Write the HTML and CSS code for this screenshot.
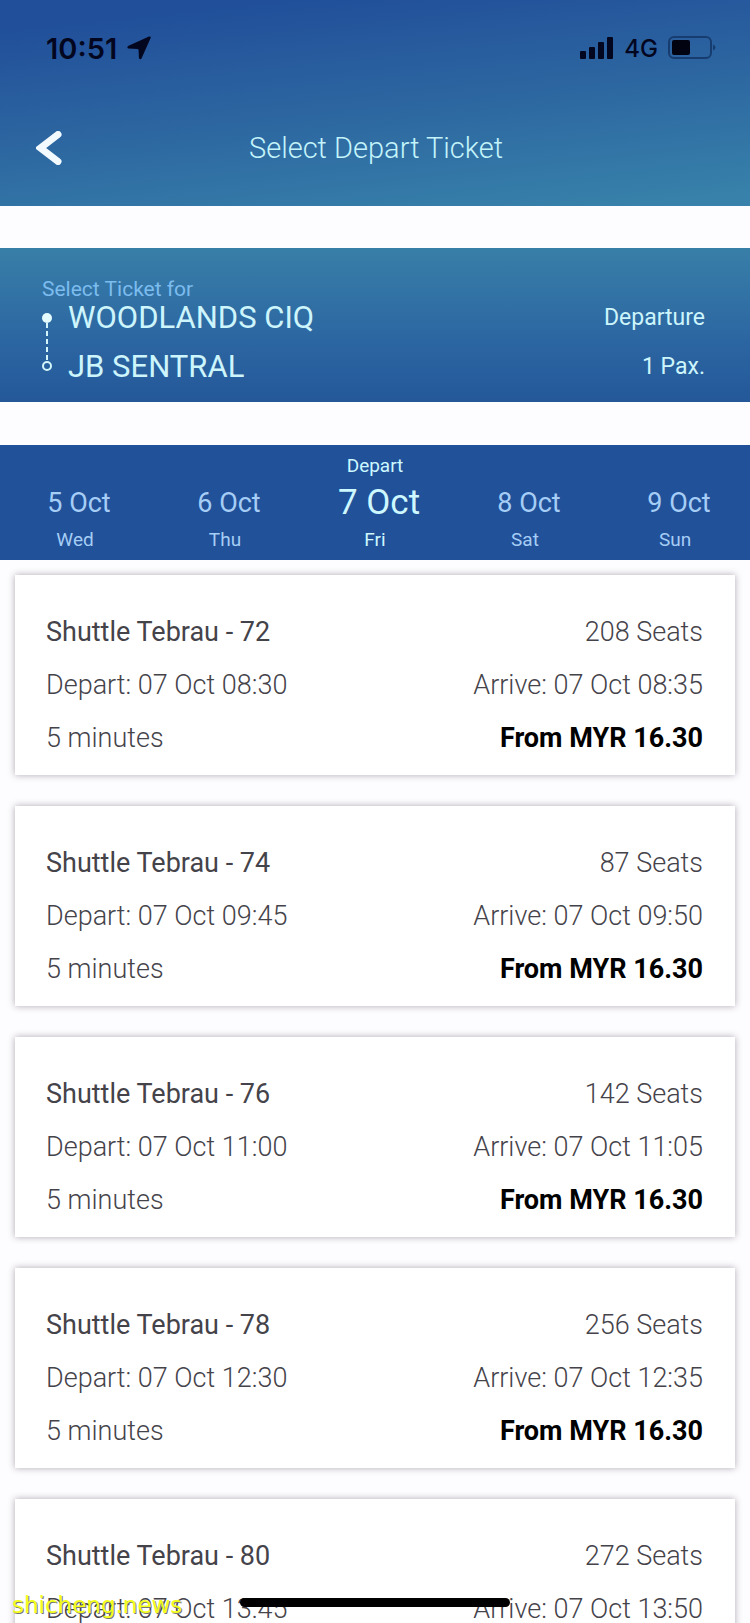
FILE: index.html
```html
<!DOCTYPE html>
<html lang="en">
<head>
  <meta charset="UTF-8"/>
  <meta name="viewport" content="width=device-width, initial-scale=1.0"/>
  <title>Select Depart Ticket</title>
  <link rel="stylesheet" href="styles.css">
</head>
<body>
  <div class="screen">
    <header class="top">
      <div class="status">
        <div class="status-left">
          <span class="time">10:51</span>
          <svg width="24" height="24" viewBox="0 0 24 24"><path d="M22 .6C23.500 0 24.200 .8 23.500 2.200L14.600 22.200C14 23.700 12 23.500 11.900 21.800L11.600 14Q11.500 13 10.500 12.900L2 12.600C0 12.500 -.2 10.500 1.600 9.700Z" fill="#03061f"/></svg>
        </div>
        <div class="status-right">
          <svg width="34" height="22" viewBox="0 0 34 22" fill="#03061f"><rect x="0" y="14" width="6" height="8" rx="1"/><rect x="9" y="10" width="6" height="12" rx="1"/><rect x="18" y="5" width="6" height="17" rx="1"/><rect x="27" y="0" width="6" height="22" rx="1"/></svg>
          <span class="network">4G</span>
          <svg width="48" height="24" viewBox="0 0 48 24"><rect x="1" y="1" width="42" height="21" rx="5" fill="none" stroke="#173d70" stroke-width="2"/><rect x="4" y="4" width="18" height="15" rx="2" fill="#010310"/><path d="M45 8.500Q47.500 9.500 47.500 11.500T45 14.500Z" fill="#173d70"/></svg>
        </div>
      </div>
      <div class="nav">
        <button class="back" aria-label="Back">
          <svg width="26" height="34" viewBox="0 0 26 34"><path d="M22 3.500L4.500 17L22 30.500" fill="none" stroke="#f2faff" stroke-width="7" stroke-linecap="round" stroke-linejoin="miter"/></svg>
        </button>
        <h1>Select Depart Ticket</h1>
      </div>
    </header>

    <section class="route">
      <div class="route-label">Select Ticket for</div>
      <div class="route-body">
        <svg width="10" height="60" viewBox="0 0 10 60"><circle cx="5" cy="6" r="5" fill="#e4fbff"/><path d="M5 11V48" stroke="#d4f5fb" stroke-width="2" stroke-dasharray="5 3"/><circle cx="5" cy="54" r="4" fill="none" stroke="#d4f5fb" stroke-width="2"/></svg>
        <div class="stations">
          <div>WOODLANDS CIQ</div>
          <div>JB SENTRAL</div>
        </div>
        <div class="trip">
          <div>Departure</div>
          <div>1 Pax.</div>
        </div>
      </div>
    </section>

    <nav class="dates">
      <button class="date"><span class="day">5 Oct</span><span>Wed</span></button>
      <button class="date"><span class="day">6 Oct</span><span>Thu</span></button>
      <button class="date active"><span>Depart</span><span class="day">7 Oct</span><span>Fri</span></button>
      <button class="date"><span class="day">8 Oct</span><span>Sat</span></button>
      <button class="date"><span class="day">9 Oct</span><span>Sun</span></button>
    </nav>

    <main class="tickets">
      <article class="ticket">
        <div class="row"><h2>Shuttle Tebrau - 72</h2><span>208 Seats</span></div>
        <div class="row"><span>Depart: 07 Oct 08:30</span><span>Arrive: 07 Oct 08:35</span></div>
        <div class="row"><span>5 minutes</span><strong>From MYR 16.30</strong></div>
      </article>
      <article class="ticket">
        <div class="row"><h2>Shuttle Tebrau - 74</h2><span>87 Seats</span></div>
        <div class="row"><span>Depart: 07 Oct 09:45</span><span>Arrive: 07 Oct 09:50</span></div>
        <div class="row"><span>5 minutes</span><strong>From MYR 16.30</strong></div>
      </article>
      <article class="ticket">
        <div class="row"><h2>Shuttle Tebrau - 76</h2><span>142 Seats</span></div>
        <div class="row"><span>Depart: 07 Oct 11:00</span><span>Arrive: 07 Oct 11:05</span></div>
        <div class="row"><span>5 minutes</span><strong>From MYR 16.30</strong></div>
      </article>
      <article class="ticket">
        <div class="row"><h2>Shuttle Tebrau - 78</h2><span>256 Seats</span></div>
        <div class="row"><span>Depart: 07 Oct 12:30</span><span>Arrive: 07 Oct 12:35</span></div>
        <div class="row"><span>5 minutes</span><strong>From MYR 16.30</strong></div>
      </article>
      <article class="ticket">
        <div class="row"><h2>Shuttle Tebrau - 80</h2><span>272 Seats</span></div>
        <div class="row"><span>Depart: 07 Oct 13:45</span><span>Arrive: 07 Oct 13:50</span></div>
        <div class="row"><span>5 minutes</span><strong>From MYR 16.30</strong></div>
      </article>
    </main>

    <div class="home-bar"></div>
    <div class="watermark">shicheng.news</div>
  </div>
</body>
</html>
```
FILE: styles.css
```css
* { box-sizing:border-box; }
body { margin:0; background:#fdfcfe; color:#45434a; font-family:Roboto, sans-serif; }
h1, h2 { margin:0; }
button { border:0; padding:0; background:none; color:inherit; font:inherit; cursor:pointer; }
svg { display:block; flex-shrink:0; }
.screen { position:relative; height:100vh; overflow:hidden; }

/* header */
.top { padding:28px 34px 24px 36px; background:linear-gradient(174deg, #214f9a 10%, #2c65a0 50%, #3781aa 95%); }
.status { display:flex; justify-content:space-between; align-items:center; height:40px; color:#03061f; font-family:Inter, sans-serif; }
.status-left, .status-right { display:flex; align-items:center; gap:10px; }
.status-left { padding-left:10px; }
.time { font-size:29px; font-weight:600; }
.network { font-size:24px; font-weight:500; }
.nav { display:grid; grid-template-columns:26px 1fr 26px; align-items:center; height:114px; padding-top:46px; }
.nav h1 { color:#c4f4fb; font-size:29px; font-weight:300; text-align:center; }

/* route */
.route { margin-top:42px; padding:29px 45px 11px 42px; background:linear-gradient(#387fa8, #2c66a2 60%, #245899); color:#cdf5fc; }
.route-label { color:#7cbcee; font-size:21px; line-height:24px; }
.route-body { display:flex; align-items:center; margin-top:-8px; }
.stations { flex:1; padding-left:16px; font-size:31px; line-height:49px; }
.trip { font-size:23px; line-height:49px; text-align:right; }

/* date strip */
.dates { display:grid; grid-template-columns:repeat(5, 1fr); height:115px; margin-top:43px; background:#215199; color:#a5cdf5; }
.date { display:flex; flex-direction:column; align-items:center; justify-content:flex-end; padding-bottom:8px; font-size:19px; line-height:24px; }
.day { padding-left:8px; font-size:27px; line-height:50px; }
.active { color:#cdf8ff; }
.active .day { font-size:35px; }

/* tickets */
.tickets { display:flex; flex-direction:column; gap:31px; padding:15px; }
.ticket { padding:31px 32px 10px 31px; background:#fff; box-shadow:0 0 7px rgba(60,50,70,0.4); }
.row { display:flex; justify-content:space-between; font-size:27px; font-weight:300; line-height:53px; }
.row h2 { font-size:27px; font-weight:400; }
.row strong { color:#000; font-weight:700; }

/* overlays */
.home-bar { position:absolute; left:50%; bottom:16px; width:36%; height:9px; border-radius:5px; background:#000; transform:translateX(-50%); }
.watermark { position:absolute; left:12px; bottom:4px; color:#f2ff1c; font-family:"DejaVu Sans", sans-serif; font-size:23px; line-height:28px; text-shadow:1px 1px 0 #777; }
```
